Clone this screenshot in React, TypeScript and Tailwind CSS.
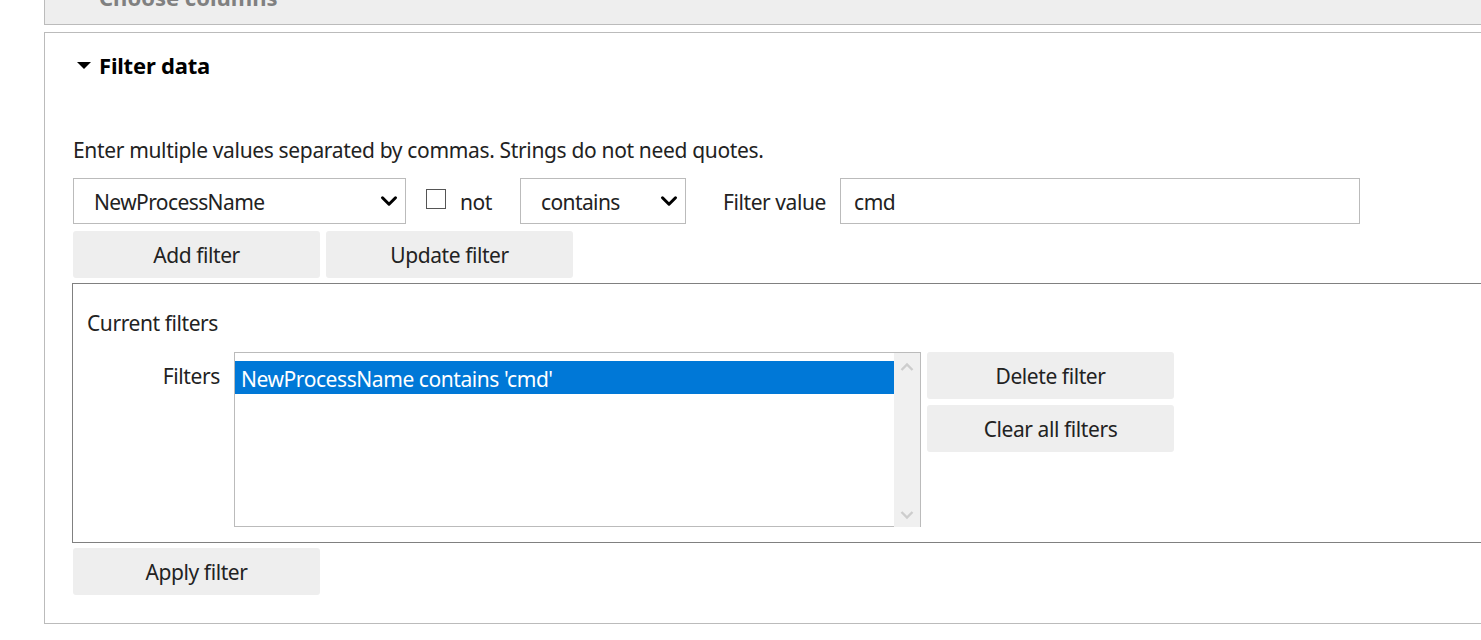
import { ChevronDown } from "lucide-react";
import type { ReactNode } from "react";

const FONT = "font-['Noto_Sans','Open_Sans',sans-serif]";

function ActionButton({ children }: { children: ReactNode }) {
  return (
    <button
      type="button"
      className="h-[47px] w-[247px] shrink-0 rounded-[3px] bg-[#eeeeee] pt-[3px] text-[21px] tracking-[-0.42px] text-[#222222]"
    >
      {children}
    </button>
  );
}

function Dropdown({ value, width }: { value: string; width: string }) {
  return (
    <div className={`relative h-[46px] shrink-0 ${width}`}>
      <select
        defaultValue={value}
        className="h-full w-full appearance-none border border-[#bbbbbb] bg-white pl-[20px] pt-[3px] text-[21px] tracking-[-0.6px] text-[#222222] outline-none"
      >
        <option>{value}</option>
      </select>
      <ChevronDown
        className="pointer-events-none absolute right-[4px] top-[10px] h-[26px] w-[26px] text-black"
        strokeWidth={2.8}
      />
    </div>
  );
}

function Scrollbar() {
  return (
    <div className="flex w-[27px] shrink-0 flex-col items-center justify-between border-r border-[#bbbbbb] bg-[#f0f0f0] pb-[7px] pt-[9px]">
      <svg width="14" height="10" viewBox="0 0 14 10" fill="none" stroke="#cdcdcd" strokeWidth="2.4">
        <path d="M1.5 8 7 2.5 12.5 8" />
      </svg>
      <svg width="14" height="10" viewBox="0 0 14 10" fill="none" stroke="#cdcdcd" strokeWidth="2.4">
        <path d="M1.5 2 7 7.5 12.5 2" />
      </svg>
    </div>
  );
}

export default function App() {
  return (
    <div className={`h-[640px] w-[1481px] overflow-hidden bg-white pl-[44px] ${FONT}`}>
      <div className="w-[1600px]">
        <div className="h-[25px] overflow-hidden border-b border-l border-[#bbbbbb] bg-[#eeeeee] pl-[54px]">
          <div className="-mt-[17px] text-[22px] font-bold leading-[28px] text-[#808080]">
            Choose columns
          </div>
        </div>

        <div className="mt-[7px] h-[592px] border border-[#bbbbbb] bg-white pl-[28px] pt-[18px]">
          <div className="flex h-[28px] items-center pl-[4px]">
            <svg width="14" height="7" viewBox="0 0 14 7" className="mt-px shrink-0">
              <path d="M0 0h14L7 7z" fill="#000000" />
            </svg>
            <span className="ml-[8px] text-[22px] font-bold tracking-[-0.2px] text-black">Filter data</span>
          </div>

          <p className="mt-[55px] h-[32px] text-[21px] leading-[32px] tracking-[-0.34px] text-[#222222]">
            Enter multiple values separated by commas. Strings do not need quotes.
          </p>

          <div className="mt-[12px] flex h-[46px] items-center">
            <Dropdown value="NewProcessName" width="w-[333px]" />
            <input
              type="checkbox"
              readOnly
              className="ml-[20px] h-[20px] w-[20px] shrink-0 -translate-y-[2px] appearance-none border border-[#555555] bg-white"
            />
            <span className="ml-[14px] w-[60px] shrink-0 pt-[3px] text-[21px] tracking-[-0.42px] text-[#222222]">not</span>
            <Dropdown value="contains" width="w-[166px]" />
            <span className="ml-[37px] w-[117px] shrink-0 pt-[3px] text-[21px] tracking-[-0.42px] text-[#222222]">Filter value</span>
            <input
              type="text"
              readOnly
              value="cmd"
              className="h-[46px] w-[520px] shrink-0 border border-[#bbbbbb] bg-white pl-[13px] pt-[2px] text-[21px] tracking-[-0.42px] text-[#222222] outline-none"
            />
          </div>

          <div className="mt-[7px] flex gap-[6px]">
            <ActionButton>Add filter</ActionButton>
            <ActionButton>Update filter</ActionButton>
          </div>

          <div className="-ml-px mt-[5px] h-[260px] border border-[#808080] pl-[14px] pt-[24px]">
            <div className="h-[30px] text-[21px] leading-[30px] tracking-[-0.42px] text-[#222222]">Current filters</div>
            <div className="mt-[14px] flex">
              <div className="w-[133px] shrink-0 pt-[9px] text-right text-[21px] leading-[30px] tracking-[-0.38px] text-[#222222]">
                Filters
              </div>
              <div className="ml-[14px] flex h-[175px] w-[687px] shrink-0 border-t border-[#bbbbbb]">
                <div className="flex-1 border-b border-l border-[#bbbbbb] bg-white pt-[8px]">
                  <div className="h-[33px] bg-[#0078d7] pl-[6px] text-[21px] leading-[36px] tracking-[-0.43px] text-white">
                    NewProcessName contains 'cmd'
                  </div>
                </div>
                <Scrollbar />
              </div>
              <div className="ml-[6px] flex flex-col gap-[6px]">
                <ActionButton>Delete filter</ActionButton>
                <ActionButton>Clear all filters</ActionButton>
              </div>
            </div>
          </div>

          <div className="mt-[5px]">
            <ActionButton>Apply filter</ActionButton>
          </div>
        </div>
      </div>
    </div>
  );
}
